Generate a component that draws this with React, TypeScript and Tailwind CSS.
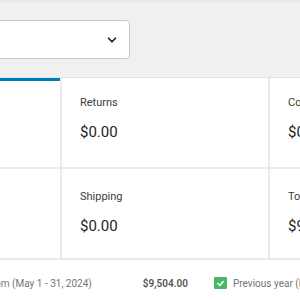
import React from 'react';

const Cell = ({ label, value, top = 17 }: { label: string; value: string; top?: number }) => (
  <div className={`h-full pl-[18px] ${top === 17 ? 'pt-[17px]' : 'pt-[20px]'}`}>
    <div className="text-[11px] leading-[15px] text-[#3c3c3c]">{label}</div>
    <div className="mt-[12px] text-[15px] leading-[20px] text-[#1e1e1e]">{value}</div>
  </div>
);

const App: React.FC = () => {
  return (
    <div className="w-[300px] h-[300px] overflow-hidden bg-[#f0f0f0] flex flex-col" style={{ fontFamily: 'Roboto, "Noto Sans", sans-serif' }}>
      <div className="h-[3px] shrink-0 bg-gradient-to-b from-[#e6e6e6] to-[#f0f0f0]" />
      <div className="h-[74px] shrink-0 pt-[17px]">
        <div className="-ml-[12px] w-[142px] h-[39px] bg-white border border-[#c8c8c8] rounded-[4px] flex items-center justify-end pr-[10px]">
          <svg width="14" height="14" viewBox="0 0 24 24" fill="none" stroke="#1e1e1e" strokeWidth="3" strokeLinecap="round" strokeLinejoin="round">
            <path d="M6 9l6 6 6-6" />
          </svg>
        </div>
      </div>
      <div className="bg-white border-t border-[#e4e4e4] shrink-0">
        <div className="flex h-[91px] border-b-2 border-[#eaeaea]">
          <div className="w-[60px] shrink-0 border-t-[3px] border-[#007cba]" />
          <div className="w-[210px] shrink-0 border-l-2 border-r-2 border-[#eaeaea]">
            <Cell label="Returns" value="$0.00" />
          </div>
          <div className="flex-1 whitespace-nowrap">
            <Cell label="Coupons" value="$0.00" />
          </div>
        </div>
        <div className="flex h-[91px] border-b-2 border-[#eaeaea]">
          <div className="w-[60px] shrink-0" />
          <div className="w-[210px] shrink-0 border-l-2 border-r-2 border-[#eaeaea]">
            <Cell label="Shipping" value="$0.00" top={20} />
          </div>
          <div className="flex-1 whitespace-nowrap">
            <Cell label="Total sales" value="$9,504.00" top={20} />
          </div>
        </div>
        <div className="flex items-center h-[40px] pt-[6px] text-[10px] whitespace-nowrap">
          <div className="w-[188px] shrink-0 flex items-center justify-end">
            <span className="text-[#757575] mr-[51px]">Custom (May 1 - 31, 2024)</span>
            <span className="font-semibold text-[#555]">$9,504.00</span>
          </div>
          <div className="ml-[26px] w-[13px] h-[12px] bg-[#4ab866] rounded-[1px] flex items-center justify-center shrink-0">
            <svg width="9" height="9" viewBox="0 0 24 24" fill="none" stroke="#fff" strokeWidth="4" strokeLinecap="round" strokeLinejoin="round">
              <path d="M5 12l5 5 9-10" />
            </svg>
          </div>
          <span className="ml-[6px] text-[10px] text-[#757575]">Previous year (May 1 - 31, 2023)</span>
        </div>
      </div>
    </div>
  );
};

export default App;
